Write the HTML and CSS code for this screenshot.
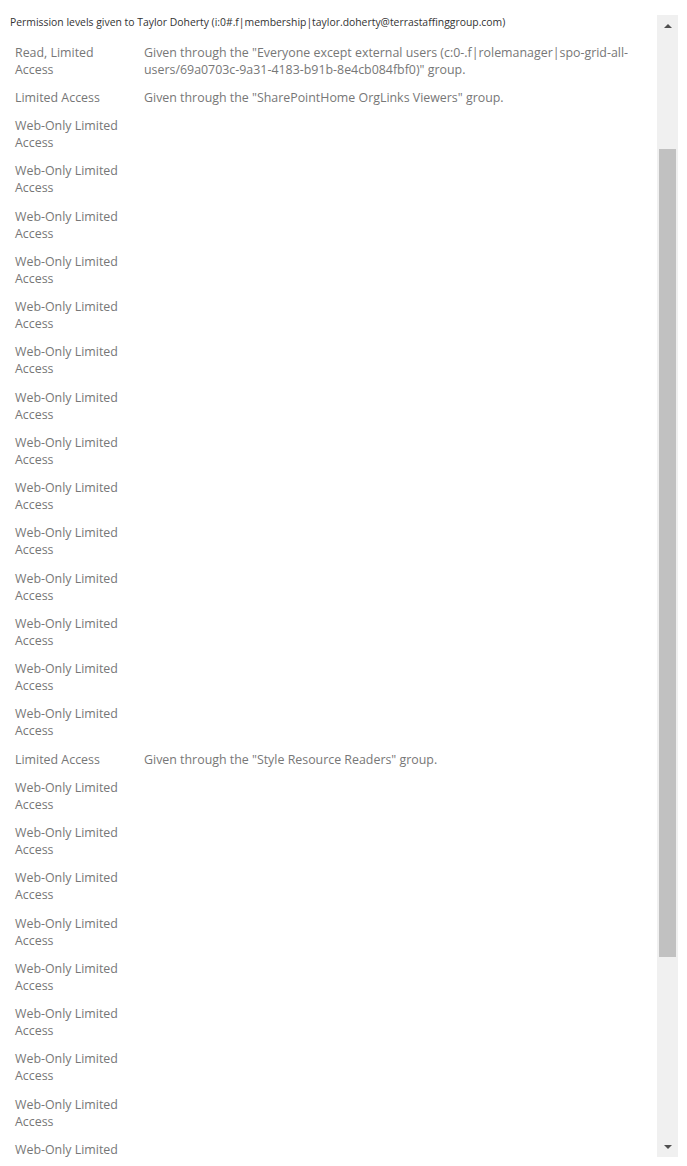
FILE: index.html
```html
<!DOCTYPE html>
<html lang="en">
<head>
<meta charset="utf-8">
<title>Permission levels</title>
<link rel="stylesheet" href="styles.css">
</head>
<body>
<div class="page">
  <div class="content">
    <div class="title">Permission levels given to Taylor Doherty (i:0#.f|membership|taylor.doherty@terrastaffinggroup.com)</div>
    <div class="perm-list">
      <div class="level">Read, Limited Access</div><div class="source">Given through the "Everyone except external users (c:0-.f|rolemanager|spo-grid-all-users/69a0703c-9a31-4183-b91b-8e4cb084fbf0)" group.</div>
      <div class="level">Limited Access</div><div class="source">Given through the "SharePointHome OrgLinks Viewers" group.</div>
      <div class="level">Web-Only Limited Access</div><div class="source"></div>
      <div class="level">Web-Only Limited Access</div><div class="source"></div>
      <div class="level">Web-Only Limited Access</div><div class="source"></div>
      <div class="level">Web-Only Limited Access</div><div class="source"></div>
      <div class="level">Web-Only Limited Access</div><div class="source"></div>
      <div class="level">Web-Only Limited Access</div><div class="source"></div>
      <div class="level">Web-Only Limited Access</div><div class="source"></div>
      <div class="level">Web-Only Limited Access</div><div class="source"></div>
      <div class="level">Web-Only Limited Access</div><div class="source"></div>
      <div class="level">Web-Only Limited Access</div><div class="source"></div>
      <div class="level">Web-Only Limited Access</div><div class="source"></div>
      <div class="level">Web-Only Limited Access</div><div class="source"></div>
      <div class="level">Web-Only Limited Access</div><div class="source"></div>
      <div class="level">Web-Only Limited Access</div><div class="source"></div>
      <div class="level">Limited Access</div><div class="source">Given through the "Style Resource Readers" group.</div>
      <div class="level">Web-Only Limited Access</div><div class="source"></div>
      <div class="level">Web-Only Limited Access</div><div class="source"></div>
      <div class="level">Web-Only Limited Access</div><div class="source"></div>
      <div class="level">Web-Only Limited Access</div><div class="source"></div>
      <div class="level">Web-Only Limited Access</div><div class="source"></div>
      <div class="level">Web-Only Limited Access</div><div class="source"></div>
      <div class="level">Web-Only Limited Access</div><div class="source"></div>
      <div class="level">Web-Only Limited Access</div><div class="source"></div>
      <div class="level">Web-Only Limited Access</div><div class="source"></div>
    </div>
  </div>
  <div class="scrollbar">
    <div class="sb-btn"><span class="arrow-up"></span></div>
    <div class="sb-track">
      <div class="sb-thumb"></div>
    </div>
    <div class="sb-btn"><span class="arrow-down"></span></div>
  </div>
</div>
</body>
</html>
```
FILE: styles.css
```css
html, body {
  margin: 0;
  padding: 0;
  height: 100%;
  overflow: hidden;
  background: #fff;
}

body {
  font-family: "Segoe UI", "Open Sans", "Noto Sans", sans-serif;
}

.page {
  display: flex;
  height: 1142px;
  margin-top: 15px;
  overflow: hidden;
}

.content {
  flex: 1;
  min-width: 0;
  overflow: hidden;
  padding-left: 10px;
  padding-right: 12px;
}

.title {
  font-size: 10.4px;
  line-height: 14px;
  color: #333;
  margin-bottom: 9px;
  white-space: nowrap;
}

.perm-list {
  display: grid;
  grid-template-columns: 134px 1fr;
  font-size: 12.4px;
  line-height: 17px;
  color: #777;
}

.level {
  padding: 5.625px 10px 5.625px 5px;
}

.source {
  padding: 5.625px 0;
}

.scrollbar {
  flex: none;
  width: 21px;
  margin-right: 9px;
  background: #f0f0f0;
  display: flex;
  flex-direction: column;
}

.sb-btn {
  flex: none;
  height: 21px;
  display: flex;
  align-items: center;
  justify-content: center;
}

.arrow-up {
  width: 0;
  height: 0;
  border-left: 4px solid transparent;
  border-right: 4px solid transparent;
  border-bottom: 4px solid #505050;
}

.arrow-down {
  width: 0;
  height: 0;
  border-left: 4px solid transparent;
  border-right: 4px solid transparent;
  border-top: 4px solid #505050;
}

.sb-track {
  flex: 1;
  padding: 0 2px;
}

.sb-thumb {
  margin-top: 113px;
  height: 808px;
  background: #c1c1c1;
}
```
